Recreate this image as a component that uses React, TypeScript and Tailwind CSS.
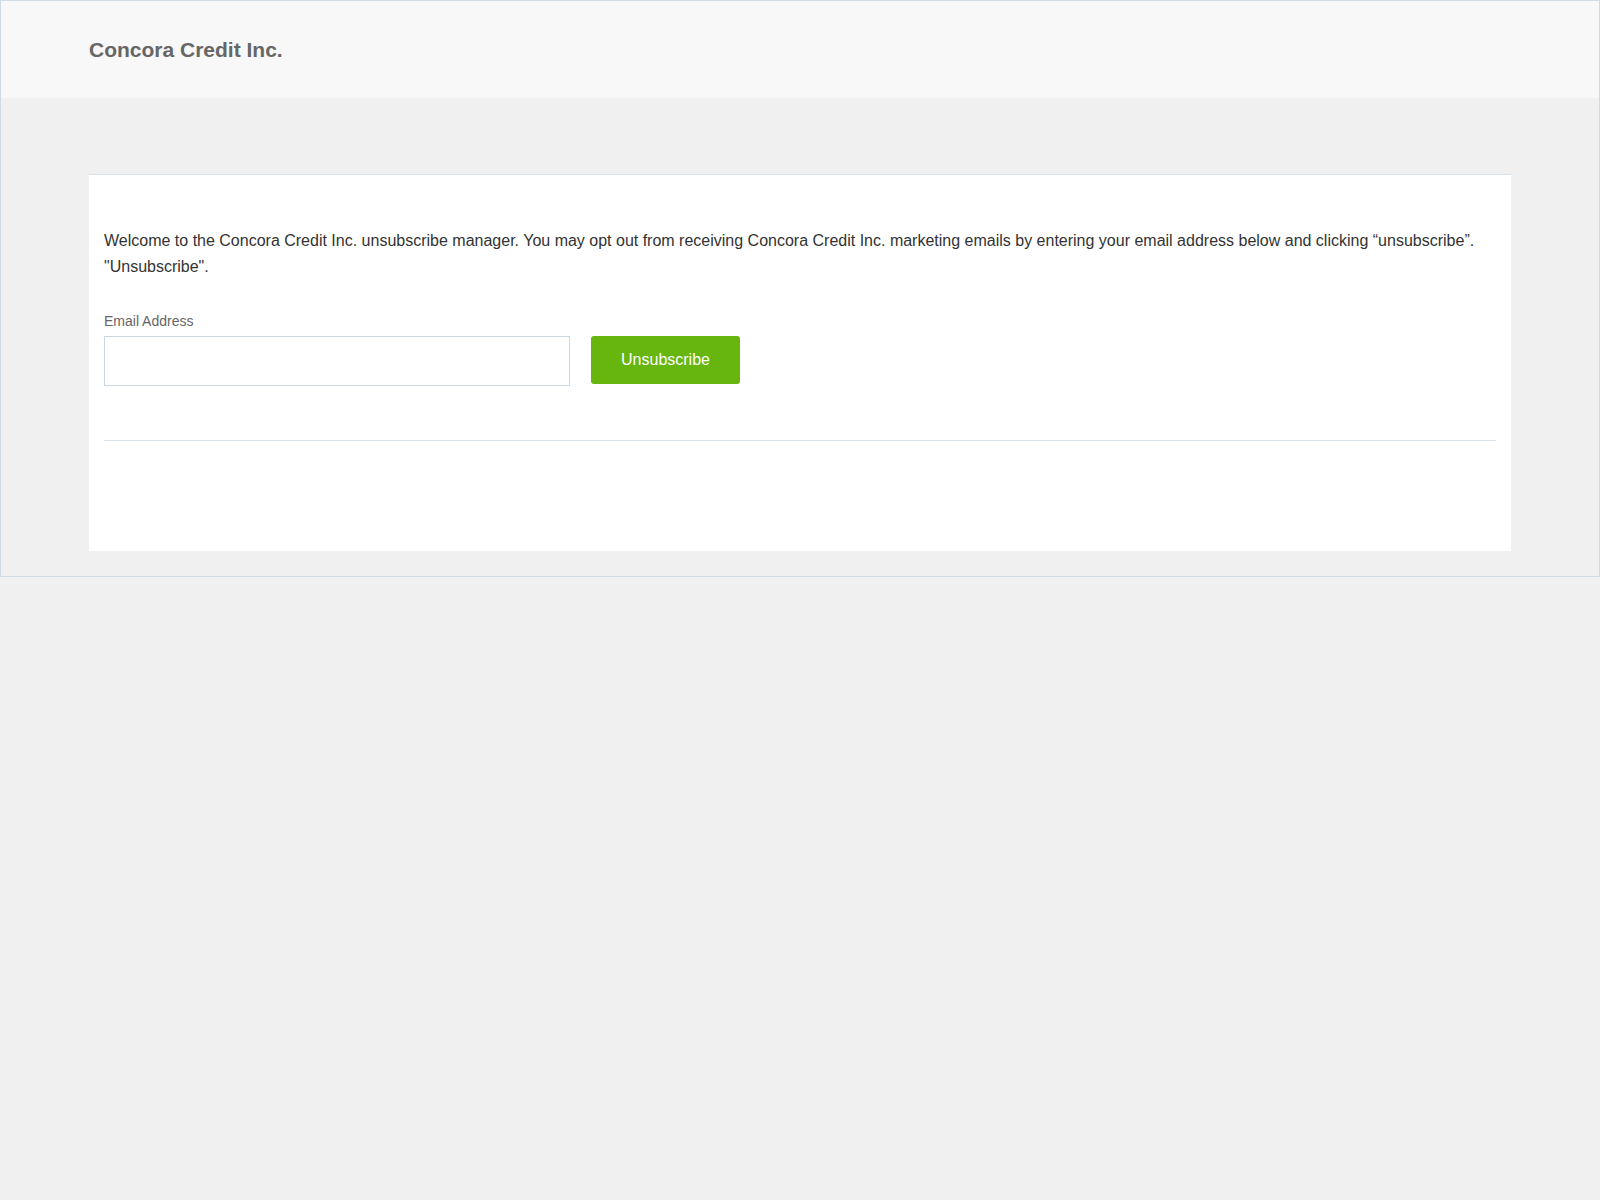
import React from 'react';

const App: React.FC = () => {
  return (
    <div className="min-h-[1200px] bg-[#f0f0f0] font-['Liberation_Sans',Arial,sans-serif]">
      <div className="border border-[#cddbe6] bg-[#f0f0f0]">
        <header className="flex h-[97px] items-center bg-[#f8f8f8] px-[88px]">
          <h1 className="text-[21px] font-bold text-[#666666]">Concora Credit Inc.</h1>
        </header>

        <main className="px-[88px] pt-[76px] pb-[25px]">
          <section className="border-t border-[#d5e2ec] bg-white px-[15px] pt-[53px] pb-[110px]">
            <p className="text-[16px] leading-[26px] text-[#333333]">
              Welcome to the Concora Credit Inc. unsubscribe manager. You may opt out from receiving
              Concora Credit Inc. marketing emails by entering your email address below and clicking
              “unsubscribe”. "Unsubscribe".
            </p>

            <form className="mt-[31px]" onSubmit={(e) => e.preventDefault()}>
              <label htmlFor="email" className="block text-[14px] leading-[20px] text-[#666666]">
                Email Address
              </label>
              <div className="mt-[5px] flex items-start gap-[21px]">
                <input
                  id="email"
                  type="email"
                  className="h-[50px] w-[466px] border border-[#c8d7e1] bg-white px-3 text-[16px] outline-none"
                />
                <button
                  type="submit"
                  className="h-[48px] w-[149px] rounded-[3px] bg-[#67b50f] text-[16px] text-white"
                >
                  Unsubscribe
                </button>
              </div>
            </form>

            <hr className="mt-[54px] border-0 border-t border-[#d5e2ec]" />
          </section>
        </main>
      </div>
    </div>
  );
};

export default App;
